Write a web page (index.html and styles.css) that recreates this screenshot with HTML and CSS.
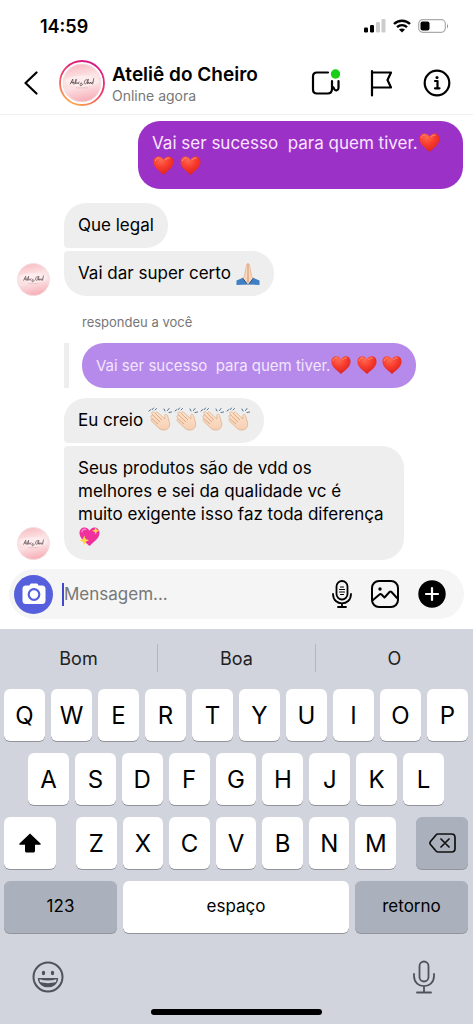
FILE: index.html
```
<!DOCTYPE html>
<html lang="pt-BR">
<head>
<meta charset="utf-8">
<meta name="viewport" content="width=device-width, initial-scale=1">
<title>Ateliê do Cheiro</title>
<link rel="stylesheet" href="styles.css">
</head>
<body>
<svg class="defs" aria-hidden="true">
  <defs>
    <radialGradient id="heart-fill" cx=".38" cy=".2" r=".85"><stop offset="0" stop-color="#ff6a50"/><stop offset=".5" stop-color="#f6392c"/><stop offset="1" stop-color="#d8201c"/></radialGradient>
    <linearGradient id="skin" x1="0" y1="0" x2="0" y2="1"><stop offset="0" stop-color="#fde3cd"/><stop offset="1" stop-color="#f7cfb2"/></linearGradient>
    <linearGradient id="ring" x1=".8" y1="0" x2=".3" y2="1"><stop offset="0" stop-color="#d6138c"/><stop offset=".55" stop-color="#ee3f68"/><stop offset="1" stop-color="#fba94c"/></linearGradient>
    <linearGradient id="rose" x1=".4" y1="0" x2=".6" y2="1"><stop offset="0" stop-color="#f9bcc4"/><stop offset=".35" stop-color="#fce3e4"/><stop offset=".6" stop-color="#fbdfe1"/><stop offset="1" stop-color="#f7aab5"/></linearGradient>
    <symbol id="heart" viewBox="0 0 22 22"><path d="M11 21C7.500 17 .5 13.500 .5 7.300C.5 3.600 3 1.500 5.800 1.500C8.200 1.500 10 2.800 11 5C12 2.800 13.800 1.500 16.200 1.500C19 1.500 21.500 3.600 21.500 7.300C21.500 13.500 14.500 17 11 21Z" fill="url(#heart-fill)"/><path d="M2.500 6C3 4 4.500 3 6.300 3.200M13 5C14 3.500 15.500 3 17 3.300" fill="none" stroke="#ff9a83" stroke-width="1" stroke-linecap="round"/></symbol>
    <symbol id="sparkle-heart" viewBox="0 0 22 22"><path d="M11 21C7.500 17 .5 13.500 .5 7.300C.5 3.600 3 1.500 5.800 1.500C8.200 1.500 10 2.800 11 5C12 2.800 13.800 1.500 16.200 1.500C19 1.500 21.500 3.600 21.500 7.300C21.500 13.500 14.500 17 11 21Z" fill="#f0309c"/><path d="M3 6C3.500 4 5 3.200 7 3.500" fill="none" stroke="#ff83cb" stroke-width="1.500" stroke-linecap="round"/><path d="M5.500 10L7 13.500L10.500 15L7 16.500L5.500 20L4 16.500L.5 15L4 13.500Z M17.500 1L18.600 3.900L21.500 5L18.600 6.100L17.500 9L16.400 6.100L13.500 5L16.400 3.900Z" fill="#ffd64c"/></symbol>
    <symbol id="pray" viewBox="0 0 24 24"><path d="M12 1.500C13.200 1.500 13.600 3 13.800 5L15.500 14L19 18L15 22.500L12 20L9 22.500L5 18L8.500 14L10.200 5C10.400 3 10.800 1.500 12 1.500Z" fill="url(#skin)" stroke="#dfa67f" stroke-width=".7"/><path d="M12 2V20" stroke="#c98a61" stroke-width=".9"/><path d="M.5 18.500L6.500 16L11.500 22.500L.5 23Z M23.500 18.500L17.500 16L12.500 22.500L23.500 23Z" fill="#3f7fc4"/><path d="M6.500 16L11.500 22.500M17.500 16L12.500 22.500" stroke="#23548f" stroke-width="1"/></symbol>
    <symbol id="clap" viewBox="0 0 24 24"><path d="M3.200 10.500C2.200 8.500 4.300 7.500 5.300 8.700L3.900 6.500C3.300 4.800 5.200 4.200 6.200 5.400L7.600 6.800C7.200 5 9 4.400 10 5.700L17 12L16.700 8.500C17 6.500 19.300 7 19.600 9L21.500 15.500C22.500 19.500 20 23 16 23C12.500 23 11 21.500 9.200 19.500L3.800 14.500C2.400 13 3 11.600 4.500 12.300Z" fill="url(#skin)" stroke="#dba982" stroke-width=".7"/><path d="M5.300 8.700L12 15M7.600 6.800L14 13M4.500 12.300L10 17" fill="none" stroke="#d39a72" stroke-width=".8"/><path d="M1 4L3 2.500M4.500 2.500L5.500 1M7 3L8.500 1.500M17 4L16 2M19.500 3.500L21 1.500M21 5.500L23.500 5" stroke="#54738c" stroke-width="1" stroke-linecap="round"/></symbol>
    <symbol id="logo" viewBox="0 0 40 40"><circle cx="20" cy="20" r="19.500" fill="url(#rose)" stroke="#eedfe0" stroke-width="1"/><ellipse cx="20" cy="18" rx="17" ry="6" fill="#fff" opacity=".35"/><path d="M8 21L10.500 16L11 21M9 19.500H12M12.500 21L14 16L13.500 21L15 19.500L16 21L17 19M18 21C20 18 20 21 18.500 22C17.500 23.500 20 23 21 21M25 16.500C22.500 16 21.500 20.500 23.500 21C25 21 26 16 26.500 16L25.500 21L27 19L27.500 21L29 19L29.500 21L31 19M32 15.500L31 21" fill="none" stroke="#5d494d" stroke-width=".8" stroke-linecap="round" stroke-linejoin="round"/><path d="M14 25H26" stroke="#ce9ca3" stroke-width=".7" stroke-dasharray="1 .6"/></symbol>
  </defs>
</svg>
<div class="screen">
  <div class="status">
    <time class="clock">14:59</time>
    <div class="status-icons">
      <svg width="22" height="14" viewBox="0 0 22 14" role="img" aria-label="Sinal"><rect x="0" y="8.500" width="4" height="5" rx="1.200"/><rect x="6" y="6" width="4" height="7.500" rx="1.200"/><rect x="12" y="3" width="4" height="10.500" rx="1.200" fill="#ccc"/><rect x="17.500" y="0" width="4" height="13.500" rx="1.200" fill="#ccc"/></svg>
      <svg width="18" height="14" viewBox="0 0 18 14" role="img" aria-label="Wi-Fi"><path d="M1 5C5.500 .7 12.500 .7 17 5M4 8.200C7 5.500 11 5.500 14 8.200" fill="none" stroke="#000" stroke-width="2.400"/><path d="M9 13.500L6 10.500C7.800 9 10.200 9 12 10.500Z"/></svg>
      <svg width="31" height="14" viewBox="0 0 31 14" role="img" aria-label="Bateria"><rect x=".7" y=".7" width="26.600" height="12.600" rx="4" fill="none" stroke="#aaa" stroke-width="1.200"/><rect x="2.500" y="2.500" width="9" height="9" rx="2"/><path d="M29 5V9.500C30.500 8.500 30.500 6 29 5Z" fill="#999"/></svg>
    </div>
  </div>

  <header class="header">
    <button class="icon-btn back" aria-label="Voltar"><svg width="14" height="24" viewBox="0 0 14 24" fill="none" stroke="#000" stroke-width="2.200" stroke-linecap="round" stroke-linejoin="round"><path d="M12.500 1.500L1.500 12L12.500 22.500"/></svg></button>
    <svg class="avatar-ring" width="46" height="46" viewBox="0 0 46 46" role="img" aria-label="Ateliê do Cheiro"><circle cx="23" cy="23" r="22" fill="#fff" stroke="url(#ring)" stroke-width="1.800"/><use href="#logo" x="3.500" y="3.500" width="39" height="39"/></svg>
    <div class="contact">
      <h1 class="name">Ateliê do Cheiro</h1>
      <p class="presence">Online agora</p>
    </div>
    <div class="actions">
      <button class="icon-btn" aria-label="Chamada de vídeo"><svg width="30" height="28" viewBox="0 0 30 28" fill="none" stroke="#000" stroke-width="2.200" stroke-linecap="round" stroke-linejoin="round"><path d="M17 3.500H6C3.500 3.500 2 5 2 7.500V20.500C2 23 3.500 24.500 6 24.500H16.500C20 24.500 21 23 21 20V12M21 18.500C22.500 17.500 22.500 19 23.500 20.500C24.500 22 27.500 21.500 27.500 19V12"/><circle cx="24.500" cy="5" r="6" fill="#fff" stroke="none"/><circle cx="24.500" cy="5" r="4.700" fill="#16cf16" stroke="none"/></svg></button>
      <button class="icon-btn" aria-label="Sinalizar"><svg width="24" height="28" viewBox="0 0 24 28" fill="none" stroke="#000" stroke-width="2.200" stroke-linecap="round" stroke-linejoin="round"><path d="M2 2V26.500M2 3.500H21L17.500 11L21 18.500H2"/></svg></button>
      <button class="icon-btn" aria-label="Informações"><svg width="28" height="28" viewBox="0 0 28 28" fill="none" stroke="#000" stroke-width="2.200" stroke-linecap="round" stroke-linejoin="round"><circle cx="14" cy="14" r="12.300"/><path d="M12 12H14.500V19M12 19.300H16.500"/><circle cx="14" cy="8.500" r="1.500" fill="#000" stroke="none"/></svg></button>
    </div>
  </header>

  <main class="chat">
    <p class="bubble mine">Vai ser sucesso  para quem tiver.<svg class="emoji" role="img" aria-label="coração"><use href="#heart"/></svg> <svg class="emoji" role="img" aria-label="coração"><use href="#heart"/></svg> <svg class="emoji" role="img" aria-label="coração"><use href="#heart"/></svg></p>

    <div class="group">
      <svg class="avatar" role="img" aria-label="Ateliê do Cheiro"><use href="#logo"/></svg>
      <div class="stack">
        <p class="bubble first">Que legal</p>
        <p class="bubble last">Vai dar super certo <svg class="emoji large" role="img" aria-label="mãos juntas"><use href="#pray"/></svg></p>
      </div>
    </div>

    <div class="group reply">
      <svg class="avatar" role="img" aria-label="Ateliê do Cheiro"><use href="#logo"/></svg>
      <div class="stack">
        <p class="reply-label">respondeu a você</p>
        <blockquote class="quote"><p class="bubble quoted">Vai ser sucesso  para quem tiver.<svg class="emoji" role="img" aria-label="coração"><use href="#heart"/></svg> <svg class="emoji" role="img" aria-label="coração"><use href="#heart"/></svg> <svg class="emoji" role="img" aria-label="coração"><use href="#heart"/></svg></p></blockquote>
        <p class="bubble first">Eu creio <span class="claps"><svg class="emoji large" role="img" aria-label="palmas"><use href="#clap"/></svg><svg class="emoji large" role="img" aria-label="palmas"><use href="#clap"/></svg><svg class="emoji large" role="img" aria-label="palmas"><use href="#clap"/></svg><svg class="emoji large" role="img" aria-label="palmas"><use href="#clap"/></svg></span></p>
        <p class="bubble last long">Seus produtos são de vdd os<br>melhores e sei da qualidade vc é<br>muito exigente isso faz toda diferença<br><svg class="emoji" role="img" aria-label="coração brilhante"><use href="#sparkle-heart"/></svg></p>
      </div>
    </div>
  </main>

  <form class="composer">
    <button type="button" class="camera" aria-label="Câmera"><svg width="24" height="22" viewBox="0 0 24 22"><path d="M7.500 2.500C8 1 8.500 .5 10 .5H14C15.500 .5 16 1 16.500 2.500H20C22.500 2.500 23.500 3.800 23.500 6V17.500C23.500 20 22.300 21 20 21H4C1.700 21 .5 20 .5 17.500V6C.5 3.800 1.500 2.500 4 2.500Z" fill="#fff"/><circle cx="12" cy="11.500" r="5.300" fill="#fff" stroke="#5660dc" stroke-width="2.200"/></svg></button>
    <input class="message" type="text" placeholder="Mensagem..." aria-label="Mensagem">
    <div class="tools">
      <button type="button" class="icon-btn" aria-label="Gravar áudio"><svg width="20" height="28" viewBox="0 0 20 28" fill="none" stroke="#000" stroke-width="1.800" stroke-linecap="round"><rect x="4.500" y="1" width="11" height="18.500" rx="5.500"/><path d="M1 14C1 26.500 19 26.500 19 14M10 23.500V27M6 27H14"/><path d="M8.500 7H11.500M7.500 9.500H12.500M7.500 12H12.500M8.500 14.500H11.500" stroke-width="1.200"/></svg></button>
      <button type="button" class="icon-btn" aria-label="Enviar foto"><svg width="28" height="28" viewBox="0 0 28 28" fill="none" stroke="#000" stroke-width="2" stroke-linecap="round" stroke-linejoin="round"><rect x="1" y="1" width="26" height="26" rx="7"/><path d="M2 20L8.500 14.500C9 14 10 14 10.500 14.500L13.500 17.500L18.500 12C19 11.500 20 11.500 20.500 12L26.500 18.500"/><circle cx="9" cy="9" r="1.700" fill="#000" stroke="none"/></svg></button>
      <button type="button" class="icon-btn" aria-label="Mais"><svg width="28" height="28" viewBox="0 0 28 28"><circle cx="14" cy="14" r="13.700"/><path d="M14 8V20M8 14H20" stroke="#fff" stroke-width="2.200" stroke-linecap="round"/></svg></button>
    </div>
  </form>

  <section class="keyboard" aria-label="Teclado">
    <div class="suggestions"><button>Bom</button><button>Boa</button><button>O</button></div>
    <div class="keys">
      <div class="row"><button class="key">Q</button><button class="key">W</button><button class="key">E</button><button class="key">R</button><button class="key">T</button><button class="key">Y</button><button class="key">U</button><button class="key">I</button><button class="key">O</button><button class="key">P</button></div>
      <div class="row inset"><button class="key">A</button><button class="key">S</button><button class="key">D</button><button class="key">F</button><button class="key">G</button><button class="key">H</button><button class="key">J</button><button class="key">K</button><button class="key">L</button></div>
      <div class="row spaced">
        <button class="key side" aria-label="Maiúsculas"><svg width="22" height="20" viewBox="0 0 22 20"><path d="M11 .5L21.500 10.500C22 11 21.800 11.800 21 11.800H16V17.500C16 19 15.500 19.500 14 19.500H8C6.500 19.500 6 19 6 17.500V11.800H1C.2 11.800 0 11 .5 10.500Z"/></svg></button>
        <div class="row letters"><button class="key">Z</button><button class="key">X</button><button class="key">C</button><button class="key">V</button><button class="key">B</button><button class="key">N</button><button class="key">M</button></div>
        <button class="key side gray" aria-label="Apagar"><svg width="27" height="20" viewBox="0 0 27 20" fill="none" stroke="#111" stroke-width="1.700" stroke-linecap="round" stroke-linejoin="round"><path d="M9 1H22.500C25 1 26 2 26 4.500V15.500C26 18 25 19 22.500 19H9C8 19 7.500 18.500 7 18L1.500 11.500C.7 10.500 .7 9.500 1.500 8.500L7 2C7.500 1.300 8 1 9 1ZM12 6L20 14M20 6L12 14"/></svg></button>
      </div>
      <div class="row bottom"><button class="key gray word">123</button><button class="key word">espaço</button><button class="key gray word">retorno</button></div>
    </div>
    <div class="dock">
      <button class="icon-btn" aria-label="Emojis"><svg width="32" height="32" viewBox="0 0 32 32" fill="none" stroke="#4f5259" stroke-width="2"><circle cx="16" cy="16" r="14.500"/><ellipse cx="11.500" cy="12" rx="1.700" ry="2.200" fill="#4f5259" stroke="none"/><ellipse cx="20.500" cy="12" rx="1.700" ry="2.200" fill="#4f5259" stroke="none"/><path d="M6.500 17.500H25.500C25 28.500 7 28.500 6.500 17.500Z" fill="#4f5259" stroke-width="1.200"/><path d="M7.500 18.300C13 20 19 20 24.500 18.300L24 21C18 22.500 14 22.500 8 21Z" fill="#d1d4dc" stroke="none"/></svg></button>
      <button class="icon-btn" aria-label="Ditar"><svg width="22" height="34" viewBox="0 0 22 34" fill="none" stroke="#4f5259" stroke-width="1.800" stroke-linecap="round"><rect x="6.500" y="1.500" width="9" height="20" rx="4.500"/><path d="M1 14V16C1 29.500 21 29.500 21 16V14M11 26.500V32.500M4 32.500H18"/></svg></button>
    </div>
    <div class="home-bar"></div>
  </section>
</div>
</body>
</html>
```
FILE: styles.css
```
* {
  box-sizing: border-box;
}

body {
  margin: 0;
  background: #fff;
  color: #000;
  font-family: Inter, "Liberation Sans", sans-serif;
}

button {
  margin: 0;
  padding: 0;
  border: 0;
  background: none;
  color: inherit;
  font: inherit;
}

svg {
  display: block;
  flex: none;
}

h1,
p,
blockquote {
  margin: 0;
}

.defs {
  position: absolute;
  width: 0;
  height: 0;
}

.screen {
  display: flex;
  flex-direction: column;
  min-height: 100vh;
}

.status {
  display: flex;
  align-items: center;
  justify-content: space-between;
  height: 52px;
  padding: 0 24px 0 40px;
}

.clock {
  font-size: 18px;
  font-weight: 600;
}

.status-icons {
  display: flex;
  gap: 7px;
}

.header {
  display: flex;
  align-items: center;
  height: 63px;
  padding: 0 22px 0 24px;
  border-bottom: 1px solid #f0eef0;
}

.back {
  margin-right: 21px;
}

.contact {
  flex: 1;
  margin-left: 7px;
  padding-top: 4px;
}

.name {
  font-size: 19px;
  font-weight: 600;
  line-height: 22px;
  white-space: nowrap;
}

.presence {
  color: #777;
  font-size: 14px;
  line-height: 20px;
}

.actions {
  display: flex;
  gap: 29px;
}

.chat {
  display: flex;
  flex: 1;
  flex-direction: column;
  padding: 6px 10px 9px 17px;
}

.bubble {
  width: fit-content;
  padding: 11px 14px;
  border-radius: 22px;
  background: #eee;
  font-size: 17px;
  line-height: 23px;
  white-space: pre-wrap;
}

.mine {
  align-self: flex-end;
  max-width: 325px;
  background: #9c31c7;
  color: #f9e4ff;
}

.first {
  border-bottom-left-radius: 4px;
}

.last {
  border-top-left-radius: 4px;
}

.long {
  padding-right: 20px;
}

.emoji {
  display: inline-block;
  width: 21px;
  height: 21px;
  margin-left: 1px;
  vertical-align: -4px;
}

.large {
  width: 24px;
  height: 24px;
  margin: -2px 0;
  vertical-align: -5px;
}

.claps {
  display: inline-flex;
  gap: 2px;
  height: 23px;
  vertical-align: -5px;
}

.group {
  display: flex;
  align-items: flex-end;
  gap: 14px;
  margin-top: 14px;
}

.reply {
  margin-top: 16px;
}

.avatar {
  width: 33px;
  height: 33px;
}

.stack {
  display: flex;
  flex-direction: column;
  gap: 3px;
  max-width: 357px;
}

.reply-label {
  padding-left: 18px;
  color: #777;
  font-size: 13px;
  line-height: 20px;
}

.quote {
  margin: 8px 0 7px;
  padding-left: 13px;
  border-left: 5px solid #eee;
}

.quoted {
  background: #b58aea;
  color: #f3e5ff;
  font-size: 15px;
  white-space: pre;
}

.quoted .emoji {
  width: 20px;
  height: 20px;
}

.composer {
  display: flex;
  align-items: center;
  height: 50px;
  margin: 0 9px 10px;
  padding: 0 18px 0 5px;
  border-radius: 25px;
  background: #f5f5f5;
}

.camera {
  display: grid;
  place-items: center;
  flex: none;
  width: 39px;
  height: 39px;
  border-radius: 50%;
  background: #5660dc;
}

.message {
  flex: 1;
  min-width: 0;
  height: 23px;
  margin-left: 9px;
  padding: 0;
  border: 0;
  border-left: 2px solid #4148d0;
  outline: 0;
  background: none;
  font: 17px Inter, "Liberation Sans", sans-serif;
}

.message::placeholder {
  color: #777;
  opacity: 1;
}

.tools {
  display: flex;
  gap: 19px;
}

.keyboard {
  padding-bottom: 9px;
  background: #d1d4dc;
}

.suggestions {
  display: flex;
  padding: 15px 0 17px;
  color: #222;
  font-size: 18px;
}

.suggestions button {
  flex: 1;
  height: 28px;
}

.suggestions button + button {
  border-left: 1px solid #b5b7bf;
}

.keys {
  display: grid;
  gap: 12px;
  padding: 0 5px 0 4px;
}

.row {
  display: flex;
  gap: 6px;
}

.inset {
  padding: 0 24px;
}

.spaced {
  gap: 20px;
}

.letters {
  flex: 1;
}

.key {
  display: grid;
  place-items: center;
  flex: 1;
  height: 52px;
  border-radius: 6px;
  background: #fff;
  box-shadow: 0 1px 0 #929499;
  font-size: 24px;
}

.side {
  flex: 0 0 52px;
}

.gray {
  background: #aab0bc;
}

.bottom {
  display: grid;
  grid-template-columns: 1fr 2fr 1fr;
}

.word {
  padding-bottom: 2px;
  font-size: 17px;
}

.dock {
  display: flex;
  align-items: center;
  justify-content: space-between;
  padding: 27px 38px 15px 32px;
}

.home-bar {
  width: 36%;
  height: 6px;
  margin: 0 auto;
  border-radius: 3px;
  background: #000;
}
```
